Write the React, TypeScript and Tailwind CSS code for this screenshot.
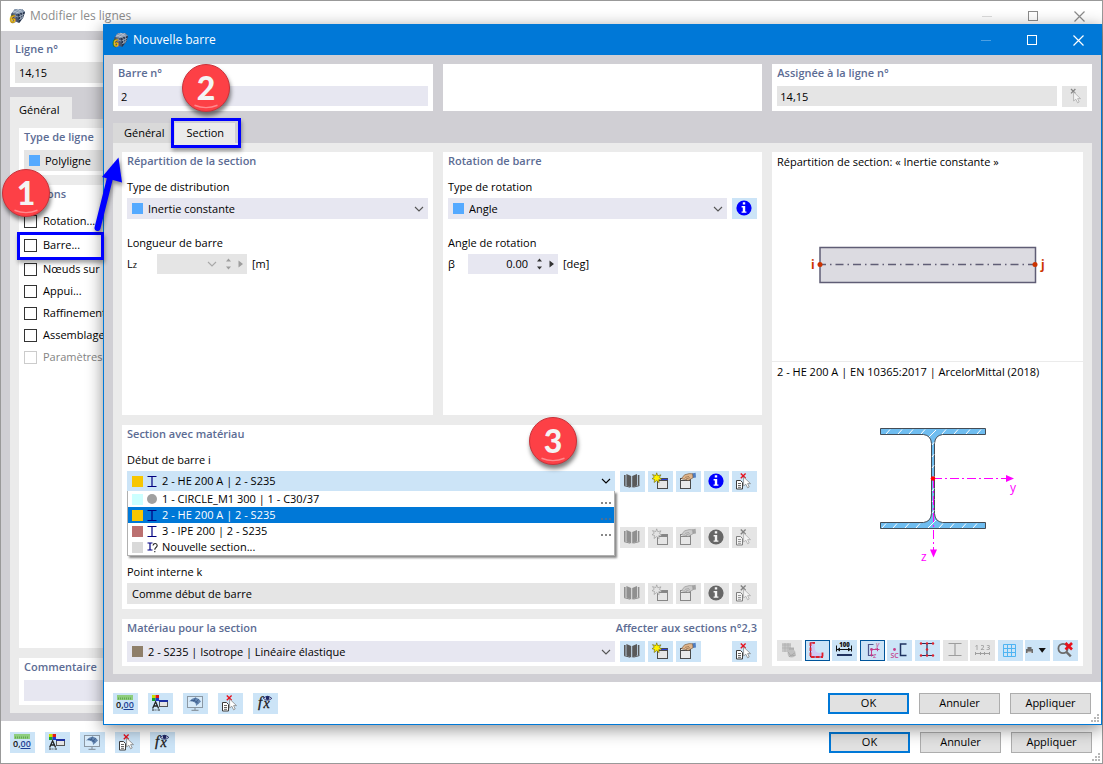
import clsx from 'clsx';
import type { ReactNode } from 'react';

type IconProps = { children: ReactNode };

function Glyph({ children }: IconProps) {
  return (
    <svg viewBox="0 0 25 21" className="block h-[21px] w-[25px]" aria-hidden="true">
      {children}
    </svg>
  );
}

function AppLogo() {
  return (
    <svg viewBox="0 0 17 17" className="h-[17px] w-[17px] overflow-visible" aria-hidden="true">
      <path d="M6 1 L13 1 L16 4 L14 10 L10 15 L3 12 L2 6 Z" fill="#46566f" />
      <path d="M6 1 L13 1 L16 4 L9 6 L3 5 Z" fill="#8496ad" />
      <path d="M9 6 L16 4 L14 10 L10 15 Z" fill="#26334b" />
      <path
        d="M4 3 L11 5.4 M8 1 L14 4.6 M10 1.2 L4 5 M13 1.5 L7 5.5 M11 6 L12 12 M13.4 5 L13 11 M9.4 9 L15 6.4 M9.8 12 L14.6 8.4 M4 7 L9 9 M6 5.600 L6 10"
        stroke="#c5d0de"
        strokeWidth="0.6"
      />
      <text x="1" y="15" fontSize="10" fontWeight="800" fill="#f3c21a" stroke="#5a4a10" strokeWidth="0.4" fontFamily="Open Sans, sans-serif">
        6
      </text>
    </svg>
  );
}

function BookIcon() {
  return (
    <Glyph>
      <path d="M4 4h1.6v10.6H4zM19.4 4h-1.6v10.6h1.6z" fill="#595959" />
      <path d="M6.4 3l4.8 2v11.4l-4.8-2zM17 3l-4.8 2v11.4l4.8-2z" fill="#595959" />
      <path d="M4 14.6l6 1.6M19.4 14.6l-6 1.6" stroke="#595959" />
    </Glyph>
  );
}

function NewIcon() {
  return (
    <Glyph>
      <rect x="9.5" y="7.5" width="10" height="10" fill="#e6e6e6" stroke="#4a4a4a" />
      <path d="M13 8.5h6.5" stroke="#2b3fe0" />
      <path d="M9 9.5h10.5" stroke="#4a4a4a" />
      <path
        d="M8.7 1.8l1.1 3 3.2-1-1.6 2.6 2.4 1.6-3 .5.3 3.2-2.4-2.2-2.6 2 .4-3-2.5-.8 2.3-1.5L4.5 3.6l3.3 1z"
        fill="#fff200"
        stroke="#6b6200"
        strokeWidth="0.6"
      />
    </Glyph>
  );
}

function EditIcon() {
  return (
    <Glyph>
      <rect x="4.5" y="7.5" width="10" height="10" fill="#e9e9e9" stroke="#4a4a4a" />
      <path d="M4.5 9.5h10" stroke="#4a4a4a" />
      <path d="M16 2.4l3.6-.6.4 4.8-3.4.4z" fill="#4f7fc4" />
      <path d="M5.6 7.4l3-3.6 4.6-1.2 3.4.2.4 4-3 1.6-2 1.2-1-1-1.6.6-.4-1.2-2 .2z" fill="#e0b48a" stroke="#6d5337" strokeWidth="0.6" />
      <path d="M9 6.4l4-1M10 8l4-1.4" stroke="#6d5337" strokeWidth="0.5" />
    </Glyph>
  );
}

function InfoIcon() {
  return (
    <Glyph>
      <circle cx="12" cy="10" r="7.6" fill="#0000ff" />
      <path d="M10.8 4.2h2.4v2.2h-2.4zM9.6 8h3.6v5.4h1.2v1.4H9.6v-1.4h1.2V9.4H9.6z" fill="#fff" />
    </Glyph>
  );
}

function CursorShape() {
  return <path d="M11.6 6v9l2.2-1.8 1.8 3.6 1.6-.8-1.6-3.4h2.9z" fill="#fff" stroke="#777" strokeWidth="0.7" />;
}

function PickIcon() {
  return (
    <Glyph>
      <path d="M9 3l4.4 4.4M13.4 3L9 7.4" stroke="#444" strokeWidth="1.3" />
      <CursorShape />
    </Glyph>
  );
}

function ClearIcon() {
  return (
    <Glyph>
      <path d="M8.8 2.6l4.8 4.6M13.6 2.6L8.8 7.2" stroke="#e8101c" strokeWidth="1.4" />
      <path d="M4.5 9.5h4l2 2v6.5h-6z" fill="#fff" stroke="#3c3c3c" />
      <path d="M6 12.5h3M6 14.5h3M6 16.3h3" stroke="#3c3c3c" strokeWidth="0.8" />
      <CursorShape />
    </Glyph>
  );
}

function UnitsIcon() {
  return (
    <Glyph>
      <rect x="4" y="2" width="16" height="5" fill="#8fce7e" />
      <path d="M5.5 4.5v2M7.5 4.5v2M9.5 4.5v2M11.5 4.5v2M13.5 4.5v2M15.5 4.5v2M17.5 4.5v2" stroke="#4d9a3c" strokeWidth="0.7" />
      <text x="3" y="15" fontSize="9" fontWeight="600" fill="#111" fontFamily="Open Sans, sans-serif">
        0,
        <tspan fill="#1c3f94">00</tspan>
      </text>
      <path d="M10.5 16.5h10" stroke="#1c3f94" />
    </Glyph>
  );
}

function DisplayIcon() {
  return (
    <Glyph>
      <path d="M4 2h3.6v3H4z" fill="#c8e000" />
      <path d="M7.6 2h3.4v3H7.6z" fill="#e01818" />
      <path d="M4 5h3.6v3H4z" fill="#18a038" />
      <path d="M7.6 5h3.4v3H7.6z" fill="#2038d0" />
      <path d="M4.6 15.4L7.6 8.8l3 6.6M5.6 13h4" stroke="#222" strokeWidth="1.3" fill="none" />
      <path d="M4 17h2.4M7.4 17h1M9.6 17h2.4" stroke="#222" />
      <rect x="11.5" y="7.5" width="8" height="6" fill="#e4e4e4" stroke="#555" />
      <path d="M11 8h9" stroke="#1c2fa0" strokeWidth="2" />
    </Glyph>
  );
}

function MonitorIcon() {
  return (
    <Glyph>
      <rect x="4.5" y="3.500" width="15" height="11" fill="#d8ebfa" stroke="#8b98a4" />
      <path d="M12 14.5v2.500M8.5 17.3h7" stroke="#8b98a4" strokeWidth="1.2" />
      <path d="M6 8.400Q9 5 12.600 4.500Q16.500 5.500 18 8.600L13 13Q13.200 9.800 10.600 8.800Q8 8 6 8.400z" fill="#6486b0" />
      <path d="M8 7.400Q12 6.400 15.400 10.600M12.600 4.600l-2 4M15.600 6.200l-2.800 3.600" stroke="#2b4c7e" strokeWidth="0.6" fill="none" />
    </Glyph>
  );
}

function FormulaIcon() {
  return (
    <Glyph>
      <text x="5" y="14" fontSize="15" fontStyle="italic" fill="#1a1a1a" stroke="#1a1a1a" strokeWidth="0.3" fontFamily="Liberation Serif, serif">
        f
      </text>
      <text x="10.500" y="15" fontSize="14" fontStyle="italic" fill="#1a1a1a" stroke="#1a1a1a" strokeWidth="0.3" fontFamily="Liberation Serif, serif">
        x
      </text>
      <path d="M10.400 5.400Q14.600 1.200 18.800 5.400Q14.600 9 10.400 5.400z" fill="#e8eefc" stroke="#1f2766" strokeWidth="0.9" />
      <circle cx="14.600" cy="5" r="1.900" fill="#1f2766" />
    </Glyph>
  );
}

function RenderIcon() {
  return (
    <Glyph>
      <rect x="5" y="3" width="9" height="9" fill="#b4b4b4" />
      <path d="M5 5h9M5 8h9M8 3v9M11 3v9" stroke="#8a8a8a" strokeWidth="0.7" />
      <path d="M12 7.5h5v3h-5z" fill="#8c8c8c" />
      <circle cx="14.6" cy="13.4" r="4" fill="#a8a8a8" />
      <path d="M11 12l3 4 5-1M12 16.8l6-4" stroke="#777" strokeWidth="0.8" fill="none" />
    </Glyph>
  );
}

function OutlineIcon() {
  return (
    <Glyph>
      <path d="M5.500 3h4q0 7 1.500 8.500t6 1.500v4H5.500z" fill="#cfc8f4" />
      <path d="M9.500 2.800H5.500V17H17.500V13" fill="none" stroke="#8a1c5c" />
      <path d="M5.500 2.500V17H18" fill="none" stroke="#e0202c" strokeWidth="1.800" strokeDasharray="3.500 1.500" />
      <path d="M7.500 2.800h2.500M17.500 12.400v4" fill="none" stroke="#e0202c" strokeWidth="1.800" />
    </Glyph>
  );
}

function DimensionIcon() {
  return (
    <Glyph>
      <text x="12.500" y="6.500" fontSize="6" fontWeight="800" textAnchor="middle" fill="#111" fontFamily="Open Sans, sans-serif">
        100
      </text>
      <path d="M4.500 5.500v6M19.500 5.500v6M5 9.500h14" stroke="#111" />
      <path d="M5 9.500l3-2v4zM19 9.500l-3-2v4z" fill="#111" />
      <path d="M5 15h15" stroke="#1f3260" strokeWidth="2" />
    </Glyph>
  );
}

function AxesIcon() {
  return (
    <Glyph>
      <path d="M13.500 4.500h-5v11h5" fill="none" stroke="#4a548c" strokeWidth="1.200" />
      <path d="M11.500 9.500h8M11.500 9.500v7M17.500 7.800v3.400M10 15h3" stroke="#c63d8a" />
      <circle cx="11.500" cy="9.500" r="1.400" fill="#c63d8a" />
      <text x="16" y="6.800" fontSize="7" fontStyle="italic" fill="#c63d8a" fontFamily="Open Sans, sans-serif">y</text>
      <text x="13" y="18" fontSize="7" fill="#c63d8a" fontFamily="Open Sans, sans-serif">z</text>
    </Glyph>
  );
}

function ShearCentreIcon() {
  return (
    <Glyph>
      <path d="M19.500 4h-6v11.500h6" fill="none" stroke="#1f3260" strokeWidth="1.500" />
      <circle cx="7.500" cy="9.500" r="1.400" fill="#c63d8a" />
      <text x="3.500" y="17.500" fontSize="7" fontWeight="600" fill="#c63d8a" fontFamily="Open Sans, sans-serif">SC</text>
    </Glyph>
  );
}

function BeamPointsIcon() {
  return (
    <Glyph>
      <path d="M5.500 3.500h13M5.500 15.500h13M12 3.500v12" stroke="#1f3260" strokeWidth="1.200" />
      <g fill="#e0202c">
        <circle cx="6" cy="3.500" r="1.200" />
        <circle cx="12" cy="3.500" r="1.200" />
        <circle cx="18" cy="3.500" r="1.200" />
        <circle cx="12" cy="9.500" r="1.200" />
        <circle cx="6" cy="15.500" r="1.200" />
        <circle cx="12" cy="15.500" r="1.200" />
        <circle cx="18" cy="15.500" r="1.200" />
      </g>
    </Glyph>
  );
}

function BeamPlainIcon() {
  return (
    <Glyph>
      <path d="M5.500 3.500h13M5.500 15.500h13M12 3.500v12" stroke="#707070" strokeWidth="1.200" />
    </Glyph>
  );
}

function NumberingIcon() {
  return (
    <Glyph>
      <text x="12.500" y="10" fontSize="7" fontWeight="600" textAnchor="middle" fill="#707070" fontFamily="Open Sans, sans-serif">1 2 3</text>
      <path d="M5 13.500h15M5.500 12v3M10.500 12v3M14.500 12v3M19.500 12v3" stroke="#707070" />
    </Glyph>
  );
}

function GridIcon() {
  return (
    <Glyph>
      <path d="M5.500 4.500h12v12h-12zM9.500 4.500v12M13.500 4.500v12M5.500 8.500h12M5.500 12.500h12" fill="none" stroke="#4fb4f2" />
    </Glyph>
  );
}

function PrintIcon() {
  return (
    <Glyph>
      <path d="M2.500 7h4v2h1.500v4H1V9h1.500z" fill="#6d6d6d" />
      <path d="M2.500 11.500h4v1.500h-4z" fill="#d5d5d5" />
      <path d="M13.600 8h7.200l-3.600 4.800z" fill="#111" />
    </Glyph>
  );
}

function ResetZoomIcon() {
  return (
    <Glyph>
      <circle cx="10" cy="8.500" r="4.600" fill="none" stroke="#6b6b6b" strokeWidth="1.800" />
      <path d="M13.400 12l4.400 4.400" stroke="#6b6b6b" strokeWidth="2.400" />
      <path d="M12.500 3l6.500 6.500M19 3l-6.500 6.500" stroke="#e8101c" strokeWidth="2.600" />
    </Glyph>
  );
}

type ToolButtonProps = { label: string; disabled?: boolean; active?: boolean; children: ReactNode };

function ToolButton({ label, disabled, active, children }: ToolButtonProps) {
  return (
    <button
      type="button"
      aria-label={label}
      disabled={disabled}
      className={clsx(
        'flex h-[21px] w-[25px] shrink-0 items-center justify-center overflow-hidden',
        disabled ? 'bg-[#e5e5e5]' : 'bg-[#cce4f7]',
        active && 'outline outline-1 -outline-offset-1 outline-[#00559b]',
      )}
    >
      <span className={clsx(disabled && 'opacity-60 grayscale')}>{children}</span>
    </button>
  );
}

function Chevron({ className }: { className?: string }) {
  return (
    <svg viewBox="0 0 10 6" className={clsx('h-[6px] w-[10px]', className)} aria-hidden="true">
      <path d="M1 1l4 4 4-4" fill="none" stroke="currentColor" strokeWidth="1.1" />
    </svg>
  );
}

function Card({ title, children, className }: { title?: string; children?: ReactNode; className?: string }) {
  return (
    <section className={clsx('min-w-0 bg-white px-[5px] pt-px', className)}>
      {title && <h2 className="h-4 font-semibold whitespace-nowrap text-[#5c6c94]">{title}</h2>}
      {children}
    </section>
  );
}

type SelectProps = { id: string; value: string; swatch?: string; tone?: string; label?: string };

function SelectBox({ id, value, swatch, tone = 'bg-[#e7e7f1]', label }: SelectProps) {
  return (
    <div className={clsx('relative flex h-[21px] min-w-0 flex-1 items-center', tone)}>
      {swatch && <span className={clsx('pointer-events-none absolute left-[5px] size-[11px]', swatch)} />}
      <select id={id} aria-label={label} className="h-full w-full appearance-none bg-transparent pl-[21px] outline-none">
        <option>{value}</option>
      </select>
      <Chevron className="pointer-events-none absolute right-1 text-[#555]" />
    </div>
  );
}

function Spinner({ muted }: { muted?: boolean }) {
  return (
    <svg viewBox="0 0 22 14" className={clsx('h-[14px] w-[22px]', muted ? 'text-[#9d9d9d]' : 'text-[#333]')} aria-hidden="true">
      <path d="M2 4.500l2.500-3 2.500 3zM2 9.500l2.500 3 2.500-3zM14.500 3.500l4.500 3.500-4.500 3.500z" fill="currentColor" />
    </svg>
  );
}

function BeamGlyph({ className }: { className?: string }) {
  return (
    <svg viewBox="0 0 10 11" className={clsx('h-[11px] w-[10px]', className)} aria-hidden="true">
      <path d="M0.500 0.500h9M0.500 10.500h9M5 0.500v10" stroke="#000080" strokeWidth="1.200" />
    </svg>
  );
}

function NewBeamGlyph() {
  return (
    <svg viewBox="0 0 11 11" className="h-[11px] w-[11px]" aria-hidden="true">
      <path d="M0.500 1h5M0.500 8h5M3 1v7" stroke="#000080" strokeWidth="1.200" />
      <path d="M6 3.500q0.300-2 2.200-2t2 2q0 1.200-1.200 2t-1.200 2.200M7.800 9v1.300" stroke="#222" fill="none" strokeWidth="1.100" />
    </svg>
  );
}

const sections = [
  { name: '1 - CIRCLE_M1 300 | 1 - C30/37', swatch: 'bg-[#ccffff]', glyph: <span className="size-[10px] rounded-full bg-[#a0a0a0]" />, more: true },
  { name: '2 - HE 200 A | 2 - S235', swatch: 'bg-[#f7c600]', glyph: <BeamGlyph />, more: true, selected: true },
  { name: '3 - IPE 200 | 2 - S235', swatch: 'bg-[#bb7070]', glyph: <BeamGlyph />, more: true },
  { name: 'Nouvelle section...', swatch: 'bg-[#d9d9d9]', glyph: <NewBeamGlyph /> },
];

function SectionList() {
  return (
    <ul
      role="listbox"
      aria-label="Sections"
      className="absolute inset-x-0 top-5 z-10 border-x border-b border-[#b0b0b0] bg-white shadow-[2px_2px_2px_#8a8a8a]"
    >
      {sections.map((s) => (
        <li
          key={s.name}
          role="option"
          aria-selected={!!s.selected}
          className={clsx('flex h-4 items-center pl-1', s.selected && 'bg-[#0078d7] text-white')}
        >
          <span className={clsx('size-[11px]', s.swatch)} />
          <span className="ml-[3px] flex w-3 justify-center">{s.glyph}</span>
          <span className="ml-1 flex-1">{s.name}</span>
          {s.more && (
            <span className={clsx('mr-[3px] flex gap-[2px] pt-2', s.selected ? 'text-[#4a6f96]' : 'text-[#888]')}>
              <i className="size-[2px] bg-current" />
              <i className="size-[2px] bg-current" />
              <i className="size-[2px] bg-current" />
            </span>
          )}
        </li>
      ))}
    </ul>
  );
}

function SectionTools({ disabled, withInfo = true }: { disabled?: boolean; withInfo?: boolean }) {
  return (
    <div className="flex shrink-0 gap-[3px]">
      <ToolButton label="Bibliothèque" disabled={disabled}><BookIcon /></ToolButton>
      <ToolButton label="Nouveau" disabled={disabled}><NewIcon /></ToolButton>
      <ToolButton label="Modifier" disabled={disabled}><EditIcon /></ToolButton>
      {withInfo ? (
        <ToolButton label="Informations" disabled={disabled}><InfoIcon /></ToolButton>
      ) : (
        <span className="w-[25px]" />
      )}
      <ToolButton label="Sélectionner" disabled={disabled}><ClearIcon /></ToolButton>
    </div>
  );
}

function TitleBar({ title, active }: { title: string; active?: boolean }) {
  return (
    <header className={clsx('flex h-[30px] shrink-0 items-center pl-2', active ? 'bg-[#0078d7] text-white' : 'bg-white text-[#8c8c8c]')}>
      <AppLogo />
      <h1 className="ml-1 flex-1 text-xs">{title}</h1>
      <button type="button" aria-label="Réduire" className="flex h-full w-[46px] items-center justify-center">
        <span className="h-px w-[10px] bg-current opacity-30" />
      </button>
      <button type="button" aria-label="Agrandir" className="flex h-full w-[46px] items-center justify-center">
        <span className="size-[10px] border border-current" />
      </button>
      <button type="button" aria-label="Fermer" className="flex h-full w-[46px] items-center justify-center">
        <svg viewBox="0 0 11 11" className="size-[11px]" aria-hidden="true">
          <path d="M0.500 0.500l10 10M10.500 0.500l-10 10" stroke="currentColor" strokeWidth="1.200" />
        </svg>
      </button>
    </header>
  );
}

function Footer() {
  return (
    <footer className="relative flex h-[42px] shrink-0 items-center justify-between bg-white pr-[10px] pl-[9px]">
      <div className="flex gap-[10px]">
        <ToolButton label="Unités"><UnitsIcon /></ToolButton>
        <ToolButton label="Affichage"><DisplayIcon /></ToolButton>
        <ToolButton label="Vue"><MonitorIcon /></ToolButton>
        <ToolButton label="Sélectionner"><ClearIcon /></ToolButton>
        <ToolButton label="Formules"><FormulaIcon /></ToolButton>
      </div>
      <div className="flex gap-[10px]">
        <button type="button" className="h-[21px] w-[81px] border-2 border-[#0078d7] bg-[#e1e1e1]">OK</button>
        <button type="button" className="h-[21px] w-[81px] border border-[#adadad] bg-[#e1e1e1]">Annuler</button>
        <button type="button" className="h-[21px] w-[81px] border border-[#adadad] bg-[#e1e1e1]">Appliquer</button>
      </div>
      <svg viewBox="0 0 8 8" className="absolute right-[2px] bottom-[2px] size-2" aria-hidden="true">
        <path d="M6 0h2v2H6zM3 3h2v2H3zM6 3h2v2H6zM0 6h2v2H0zM3 6h2v2H3zM6 6h2v2H6z" fill="#b8b8b8" />
      </svg>
    </footer>
  );
}

const lineOptions = [
  { id: 'rotation', label: 'Rotation...' },
  { id: 'barre', label: 'Barre...' },
  { id: 'noeuds', label: 'Nœuds sur' },
  { id: 'appui', label: 'Appui...' },
  { id: 'raffinement', label: 'Raffinement' },
  { id: 'assemblage', label: 'Assemblage' },
  { id: 'parametres', label: 'Paramètres', disabled: true },
];

function LinesWindow() {
  return (
    <div className="flex min-h-screen flex-col border border-[#999] bg-[#d0cfd4]">
      <TitleBar title="Modifier les lignes" />
      <div className="flex flex-1 flex-col px-[9px] pt-[9px] pb-2">
        <Card className="pb-1">
          <label htmlFor="ligne" className="block h-4 font-semibold text-[#5c6c94]">Ligne n°</label>
          <input id="ligne" readOnly value="14,15" className="mt-[5px] block h-[21px] w-full bg-[#e5e5e5] px-1 outline-none" />
        </Card>
        <div className="mt-[10px] flex">
          <button type="button" className="h-[22px] bg-[#ebebeb] pt-1 pr-[13px] pl-[9px]">Général</button>
        </div>
        <div className="flex flex-1 flex-col bg-[#ebebeb] px-[9px] pt-[9px] pb-2">
          <Card title="Type de ligne" className="pb-1">
            <div className="mt-[5px] flex">
              <SelectBox id="type-ligne" label="Type de ligne" value="Polyligne" swatch="bg-[#55aaff]" tone="bg-[#e5e5e5]" />
            </div>
          </Card>
          <Card title="Options" className="mt-[10px] flex-1">
            <ul className="mt-2">
              {lineOptions.map((o) => (
                <li key={o.id} className={clsx('flex h-[22px] items-center', o.id === 'barre' && 'my-[2px]')}>
                  <input
                    id={o.id}
                    type="checkbox"
                    disabled={o.disabled}
                    className={clsx('size-[13px] appearance-none border bg-white', o.disabled ? 'border-[#ccc]' : 'border-[#333]')}
                  />
                  <label htmlFor={o.id} className={clsx('ml-[6px]', o.disabled && 'text-[#838383]')}>{o.label}</label>
                </li>
              ))}
            </ul>
          </Card>
          <Card className="mt-[10px] pb-1">
            <label htmlFor="commentaire" className="block h-4 font-semibold text-[#5c6c94]">Commentaire</label>
            <input id="commentaire" className="mt-[5px] block h-[21px] w-full bg-[#e7e7f1] px-1 outline-none" />
          </Card>
        </div>
      </div>
      <Footer />
    </div>
  );
}

function MemberDiagram() {
  return (
    <svg viewBox="0 0 311 46" className="h-[46px] w-full" aria-hidden="true">
      <rect x="48" y="5.500" width="215.500" height="35" fill="#dcdbe1" stroke="#5f5d75" strokeWidth="1.500" />
      <path d="M48 22.500h215" stroke="#5f5d75" strokeWidth="1.300" strokeDasharray="8 4 1.500 4" strokeDashoffset="2" />
      <circle cx="48" cy="22.500" r="2.500" fill="#cc3300" />
      <circle cx="263" cy="22.500" r="2.500" fill="#cc3300" />
      <g fill="#cc3300" fontSize="12" fontWeight="700" fontFamily="Open Sans, sans-serif">
        <text x="39" y="27">i</text>
        <text x="269" y="27">j</text>
      </g>
    </svg>
  );
}

const topHatch = [114, 126, 137, 149, 170, 182, 194, 205];
const bottomHatch = [110, 121, 133, 144, 167, 178, 190, 201];
const webHatch = [18, 30, 41, 52, 64, 75, 86];

function SectionDiagram() {
  return (
    <svg viewBox="0 0 311 140" className="h-[140px] w-full" aria-hidden="true">
      <path
        d="M108.500 3.500h105v6h-43q-7.500 1-8 9v70q0.500 8 8 9h43v6h-105v-6h43q7.500-1 8-9v-70q-0.500-8-8-9h-43z"
        fill="#6fbdf0"
        stroke="#444c55"
      />
      <g stroke="#fff">
        {topHatch.map((x) => (
          <path key={x} d={`M${x} 9l4-4.500`} />
        ))}
        {bottomHatch.map((x) => (
          <path key={x} d={`M${x} 103l4-4.500`} />
        ))}
        {webHatch.map((y) => (
          <path key={y} d={`M160 ${y + 2}l2.200-2.800`} />
        ))}
        <path d="M157 12l7-7M156 103l8-8" />
      </g>
      <path d="M161 53.500h74M161.500 54v74" stroke="#ff00ff" strokeDasharray="9 3 2 3" />
      <path d="M234 50l8 3.500-8 3.500zM158 124.500h7l-3.500 8z" fill="#ff00ff" />
      <circle cx="161" cy="53.500" r="2.300" fill="#ff0000" />
      <g fill="#ff00ff" fontSize="12" fontFamily="Open Sans, sans-serif">
        <text x="238" y="67">y</text>
        <text x="149" y="136">z</text>
      </g>
    </svg>
  );
}

function MemberDialog() {
  return (
    <div
      role="dialog"
      aria-label="Nouvelle barre"
      className="absolute top-6 right-px left-[103px] border border-[#0078d7] bg-[#d0cfd4] shadow-[0_4px_16px_rgba(0,0,0,0.45)]"
    >
      <TitleBar title="Nouvelle barre" active />
      <div className="px-[9px] pt-[9px] pb-2">
        <div className="grid grid-cols-3 gap-[10px]">
          <Card className="pb-1">
            <label htmlFor="barre-no" className="block h-4 font-semibold text-[#5c6c94]">Barre n°</label>
            <input id="barre-no" defaultValue="2" className="mt-[5px] block h-5 w-full bg-[#e7e7f1] px-[3px] outline-none" />
          </Card>
          <Card />
          <Card className="pb-1">
            <label htmlFor="assignee" className="block h-4 font-semibold text-[#5c6c94]">Assignée à la ligne n°</label>
            <div className="mt-[5px] flex items-start gap-[5px]">
              <input id="assignee" readOnly value="14,15" className="block h-5 min-w-0 flex-1 bg-[#e5e5e5] px-[3px] outline-none" />
              <ToolButton label="Choisir la ligne" disabled><PickIcon /></ToolButton>
            </div>
          </Card>
        </div>

        <div role="tablist" className="mt-3 flex h-5">
          <button type="button" role="tab" aria-selected="false" className="bg-[#d9d9d9] px-[11px]">Général</button>
          <button type="button" role="tab" aria-selected="true" className="bg-[#ebebeb] px-[11px]">Section</button>
        </div>

        <div className="grid grid-cols-[311fr_319fr_311fr] gap-[10px] bg-[#ebebeb] px-[9px] pt-[9px] pb-2">
          <Card title="Répartition de la section" className="min-h-[263px]">
            <label htmlFor="distribution" className="mt-[10px] block h-4">Type de distribution</label>
            <div className="mt-[3px] flex">
              <SelectBox id="distribution" value="Inertie constante" swatch="bg-[#55aaff]" />
            </div>
            <h3 className="mt-4 h-4">Longueur de barre</h3>
            <div className="mt-[3px] flex h-5 items-center">
              <label htmlFor="longueur" className="w-[30px]">
                L<span className="text-[9px]">z</span>
              </label>
              <div className="flex h-5 w-[90px] items-center bg-[#e5e5e5] text-[#a8a8a8]">
                <input id="longueur" disabled className="w-[50px] bg-transparent" />
                <Chevron />
                <span className="ml-[7px]"><Spinner muted /></span>
              </div>
              <span className="ml-[5px]">[m]</span>
            </div>
          </Card>

          <Card title="Rotation de barre">
            <label htmlFor="rotation-type" className="mt-[10px] block h-4">Type de rotation</label>
            <div className="mt-[3px] flex gap-[5px]">
              <SelectBox id="rotation-type" value="Angle" swatch="bg-[#55aaff]" />
              <ToolButton label="Informations"><InfoIcon /></ToolButton>
            </div>
            <h3 className="mt-4 h-4">Angle de rotation</h3>
            <div className="mt-[3px] flex h-5 items-center">
              <label htmlFor="angle" className="w-5">β</label>
              <div className="flex h-5 w-[90px] items-center bg-[#e7e7f1]">
                <input id="angle" defaultValue="0.00" className="w-[60px] bg-transparent text-right outline-none" />
                <span className="ml-[7px]"><Spinner /></span>
              </div>
              <span className="ml-[5px]">[deg]</span>
            </div>
          </Card>

          <div className="row-span-3 flex min-w-0 flex-col">
            <Card className="h-[209px]">
              <p className="mt-px h-4 whitespace-nowrap">Répartition de section: « Inertie constante »</p>
              <div className="-mx-[5px] mt-[72px]">
                <MemberDiagram />
              </div>
            </Card>
            <Card className="mt-px flex flex-1 flex-col pb-[5px]">
              <p className="mt-px h-4 whitespace-nowrap">2 - HE 200 A | EN 10365:2017 | ArcelorMittal (2018)</p>
              <div className="-mx-[5px] mt-[45px]">
                <SectionDiagram />
              </div>
              <div className="mt-auto flex justify-between">
                <ToolButton label="Rendu" disabled><RenderIcon /></ToolButton>
                <ToolButton label="Contour" active><OutlineIcon /></ToolButton>
                <ToolButton label="Dimensions"><DimensionIcon /></ToolButton>
                <ToolButton label="Axes" active><AxesIcon /></ToolButton>
                <ToolButton label="Centre de cisaillement"><ShearCentreIcon /></ToolButton>
                <ToolButton label="Points de contrainte"><BeamPointsIcon /></ToolButton>
                <ToolButton label="Éléments" disabled><BeamPlainIcon /></ToolButton>
                <ToolButton label="Numérotation" disabled><NumberingIcon /></ToolButton>
                <ToolButton label="Grille"><GridIcon /></ToolButton>
                <ToolButton label="Imprimer"><PrintIcon /></ToolButton>
                <ToolButton label="Réinitialiser le zoom"><ResetZoomIcon /></ToolButton>
              </div>
            </Card>
          </div>

          <Card title="Section avec matériau" className="col-span-2 pb-[5px]">
            <label htmlFor="debut" className="mt-[10px] block h-4">Début de barre i</label>
            <div className="mt-[3px] flex gap-[5px]">
              <div className="relative flex h-5 flex-1 items-center bg-[#cce4f7]">
                <span className="pointer-events-none absolute left-[5px] size-[11px] bg-[#f7c600]" />
                <BeamGlyph className="pointer-events-none absolute left-5" />
                <select id="debut" className="h-full w-full appearance-none bg-transparent pl-[35px] outline-none">
                  <option>2 - HE 200 A | 2 - S235</option>
                </select>
                <Chevron className="pointer-events-none absolute right-1" />
                <SectionList />
              </div>
              <SectionTools />
            </div>
            <div className="mt-[35px] flex justify-end">
              <SectionTools disabled />
            </div>
            <label htmlFor="interne" className="mt-4 block h-4">Point interne k</label>
            <div className="mt-[3px] flex gap-[5px]">
              <input id="interne" readOnly value="Comme début de barre" className="h-[21px] min-w-0 flex-1 bg-[#e5e5e5] px-[5px] outline-none" />
              <SectionTools disabled />
            </div>
          </Card>

          <Card className="col-span-2 pb-1">
            <div className="flex h-4 justify-between font-semibold text-[#5c6c94]">
              <label htmlFor="materiau">Matériau pour la section</label>
              <span>Affecter aux sections n°2,3</span>
            </div>
            <div className="mt-[5px] flex gap-[5px]">
              <SelectBox id="materiau" value="2 - S235 | Isotrope | Linéaire élastique" swatch="bg-[#8f7f6a]" />
              <SectionTools withInfo={false} />
            </div>
          </Card>
        </div>
      </div>
      <Footer />
    </div>
  );
}

function StepBadge({ step, className }: { step: number; className: string }) {
  return (
    <span
      className={clsx(
        'absolute flex size-12 items-center justify-center rounded-full border border-[#c8323a] bg-[#fd4046] font-[Lato,sans-serif] text-[32px] leading-none font-black text-[#f4f4f4] shadow-[1px_4px_4px_rgba(0,0,0,0.5)]',
        className,
      )}
    >
      {step}
      <svg viewBox="0 0 48 48" className="absolute inset-0" aria-hidden="true">
        <path d="M12 42q12 5 24 0" fill="none" stroke="#ff8a8e" strokeWidth="1.500" />
      </svg>
    </span>
  );
}

export default function App() {
  return (
    <main className='relative min-h-screen overflow-hidden bg-white font-["Open_Sans","Noto_Sans",sans-serif] text-[11px] leading-4 text-black'>
      <LinesWindow />
      <MemberDialog />

      <div className="pointer-events-none absolute inset-0 z-20">
        <span className="absolute top-[232px] left-[17px] h-[28px] w-[87px] border-3 border-[#0000ff] shadow-[1px_3px_4px_rgba(0,0,0,0.35)]" />
        <span className="absolute top-[118px] left-[171px] h-[30px] w-[70px] border-3 border-[#0000ff] shadow-[1px_3px_4px_rgba(0,0,0,0.35)]" />
        <svg viewBox="0 0 36 84" className="absolute top-[152px] left-[90px] h-[84px] w-9 drop-shadow-[1px_3px_2px_rgba(0,0,0,0.4)]" aria-hidden="true">
          <path d="M7.500 76L20 26" stroke="#0000ff" strokeWidth="6" strokeLinecap="round" />
          <path d="M28.500 5.500l-16.500 19.500 20 5.500z" fill="#0000ff" />
        </svg>
        <StepBadge step={1} className="top-[169px] left-[2px]" />
        <StepBadge step={2} className="top-[64px] left-[182px]" />
        <StepBadge step={3} className="top-[417px] left-[529px]" />
      </div>
    </main>
  );
}
